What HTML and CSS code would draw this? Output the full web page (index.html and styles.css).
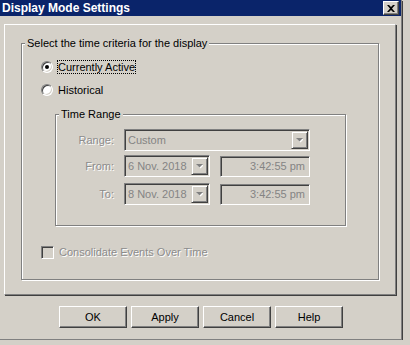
FILE: index.html
```html
<!DOCTYPE html>
<html lang="en">
<head>
    <meta charset="UTF-8">
    <title>Display Mode Settings</title>
    <link rel="stylesheet" href="styles.css">
</head>
<body>
    <div class="window">
        <div class="titlebar">
            <span class="title">Display Mode Settings</span>
            <span class="close-btn">
                <svg width="8" height="7" viewBox="0 0 8 7">
                    <path d="M0 0h2l2 2l2 -2h2l-3 3.5l3 3.5h-2l-2 -2l-2 2h-2l3 -3.5z" fill="#000"/>
                </svg>
            </span>
        </div>

        <div class="panel">
            <div class="group main-group">
                <span class="legend">Select the time criteria for the display</span>

                <div class="option first">
                    <span class="radio checked"></span>
                    <span class="option-label focused">Currently Active</span>
                </div>
                <div class="option second">
                    <span class="radio"></span>
                    <span class="option-label">Historical</span>
                </div>

                <div class="group range-group">
                    <span class="legend">Time Range</span>

                    <div class="range-row">
                        <span class="row-label">Range:</span>
                        <div class="field combo wide">
                            <span class="field-text">Custom</span>
                            <span class="drop-btn">
                                <svg width="7" height="5" viewBox="0 0 7 5">
                                    <polygon points="1,1 8,1 4.5,4.5" fill="#fff"/>
                                    <polygon points="0,0 7,0 3.5,3.5" fill="#808080"/>
                                </svg>
                            </span>
                        </div>
                    </div>
                    <div class="range-row from-row">
                        <span class="row-label">From:</span>
                        <div class="field combo date">
                            <span class="field-text">6 Nov. 2018</span>
                            <span class="drop-btn">
                                <svg width="7" height="5" viewBox="0 0 7 5">
                                    <polygon points="1,1 8,1 4.5,4.5" fill="#fff"/>
                                    <polygon points="0,0 7,0 3.5,3.5" fill="#808080"/>
                                </svg>
                            </span>
                        </div>
                        <div class="field time">
                            <span class="field-text">3:42:55 pm</span>
                        </div>
                    </div>
                    <div class="range-row to-row">
                        <span class="row-label">To:</span>
                        <div class="field combo date">
                            <span class="field-text">8 Nov. 2018</span>
                            <span class="drop-btn">
                                <svg width="7" height="5" viewBox="0 0 7 5">
                                    <polygon points="1,1 8,1 4.5,4.5" fill="#fff"/>
                                    <polygon points="0,0 7,0 3.5,3.5" fill="#808080"/>
                                </svg>
                            </span>
                        </div>
                        <div class="field time">
                            <span class="field-text">3:42:55 pm</span>
                        </div>
                    </div>
                </div>

                <div class="option consolidate">
                    <span class="checkbox"></span>
                    <span class="option-label disabled">Consolidate Events Over Time</span>
                </div>
            </div>
        </div>

        <div class="buttons">
            <span class="btn">OK</span>
            <span class="btn">Apply</span>
            <span class="btn">Cancel</span>
            <span class="btn">Help</span>
        </div>
    </div>
</body>
</html>
```

FILE: styles.css
```css
body {
    margin: 0;
    padding: 0;
    background: #d4d0c8;
    font-family: 'Liberation Sans', Arial, sans-serif;
    font-size: 11px;
    color: #000;
}
.window {
    width: 402px;
    height: 340px;
    box-sizing: border-box;
    background: #d4d0c8;
    border-right: 1px solid #808080;
    border-bottom: 1px solid #808080;
    box-shadow: 1px 1px 0 #404040;
    display: flex;
    flex-direction: column;
}
.titlebar {
    height: 16px;
    background: #0a246a;
    display: flex;
    align-items: flex-start;
    justify-content: space-between;
}
.title {
    color: #fff;
    font-weight: bold;
    font-size: 12px;
    line-height: 16px;
    padding-left: 2px;
}
.close-btn {
    width: 16px;
    height: 14px;
    margin: 1px 2px 0 0;
    box-sizing: border-box;
    background: #d4d0c8;
    border: 1px solid;
    border-color: #fff #404040 #404040 #fff;
    box-shadow: inset -1px -1px 0 #808080;
    display: flex;
    align-items: center;
    justify-content: center;
}
.panel {
    width: 392px;
    height: 271px;
    box-sizing: border-box;
    margin: 8px 0 0 4px;
    padding: 18px 0 0 16px;
    border: 1px solid;
    border-color: #fff #808080 #808080 #fff;
    box-shadow: 1px 1px 0 #404040;
}
.group {
    position: relative;
    box-sizing: border-box;
    border: 1px solid #808080;
    box-shadow: inset 1px 1px 0 #fff, 1px 1px 0 #fff;
}
.legend {
    position: absolute;
    top: -7px;
    left: 3px;
    padding: 0 2px 0 2px;
    background: #d4d0c8;
    line-height: 13px;
    white-space: nowrap;
}
.main-group {
    width: 358px;
    height: 237px;
    padding: 16px 0 0 19px;
}
.option {
    display: flex;
    align-items: center;
    height: 14px;
}
.option.second {
    margin-top: 9px;
}
.radio {
    position: relative;
    width: 12px;
    height: 12px;
    box-sizing: border-box;
    border-radius: 50%;
    border: 1px solid;
    border-color: #808080 #fff #fff #808080;
    background: #fff;
    box-shadow: inset 1px 1px 0 #404040, inset -1px -1px 0 #d4d0c8;
}
.radio.checked::after {
    content: "";
    position: absolute;
    left: 3px;
    top: 3px;
    width: 4px;
    height: 4px;
    border-radius: 50%;
    background: #000;
}
.option-label {
    margin-left: 4px;
    border: 1px solid transparent;
    line-height: 12px;
}
.option-label.focused {
    border: 1px dotted #000;
}
.option-label.disabled {
    color: #8c8c8c;
    text-shadow: 1px 1px 0 #fff;
}
.range-group {
    width: 291px;
    height: 112px;
    margin: 17px 0 0 14px;
    padding-top: 14px;
}
.range-row {
    display: flex;
    align-items: center;
}
.from-row {
    margin-top: 4px;
}
.to-row {
    margin-top: 6px;
}
.row-label {
    width: 58px;
    margin-right: 10px;
    text-align: right;
    color: #8c8c8c;
    text-shadow: 1px 1px 0 #fff;
}
.field {
    height: 22px;
    box-sizing: border-box;
    border: 1px solid;
    border-color: #808080 #fff #fff #808080;
    box-shadow: inset 1px 1px 0 #404040, inset -1px -1px 0 #d4d0c8;
    background: #d4d0c8;
    display: flex;
    align-items: center;
    color: #848484;
    font-size: 11px;
}
.field-text {
    flex: 1;
    padding-left: 3px;
    white-space: nowrap;
}
.combo.wide {
    width: 186px;
}
.combo.date {
    width: 86px;
}
.time {
    width: 90px;
    margin-left: 10px;
    height: 21px;
}
.time .field-text {
    text-align: right;
    padding-right: 4px;
}
.drop-btn {
    width: 17px;
    height: 18px;
    box-sizing: border-box;
    margin-right: 1px;
    border: 1px solid;
    border-color: #d4d0c8 #404040 #404040 #d4d0c8;
    box-shadow: inset 1px 1px 0 #fff, inset -1px -1px 0 #808080;
    display: flex;
    align-items: center;
    justify-content: center;
}
.consolidate {
    margin-top: 19px;
}
.checkbox {
    width: 13px;
    height: 13px;
    box-sizing: border-box;
    border: 1px solid;
    border-color: #808080 #fff #fff #808080;
    box-shadow: inset 1px 1px 0 #404040, inset -1px -1px 0 #d4d0c8;
    background: #d4d0c8;
}
.buttons {
    display: flex;
    gap: 4px;
    margin-top: 11px;
    padding-left: 59px;
}
.btn {
    width: 68px;
    height: 22px;
    box-sizing: border-box;
    border: 1px solid;
    border-color: #fff #404040 #404040 #fff;
    box-shadow: inset -1px -1px 0 #808080;
    display: flex;
    align-items: center;
    justify-content: center;
    font-size: 11px;
}
```
